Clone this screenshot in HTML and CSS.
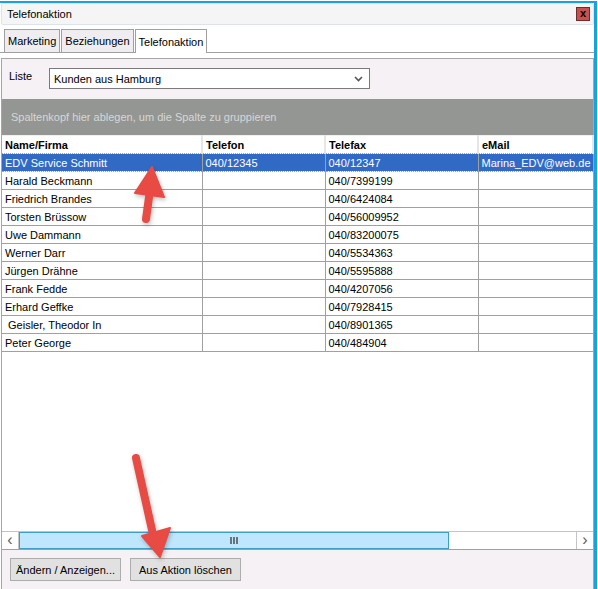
FILE: index.html
```html
<!DOCTYPE html>
<html lang="de">
<head>
    <meta charset="UTF-8">
    <title>Telefonaktion</title>
    <link rel="stylesheet" href="styles.css">
</head>
<body>
    <div class="window">
        <div class="titlebar">
            <span class="title">Telefonaktion</span>
            <span class="close">x</span>
        </div>

        <div class="tabs">
            <div class="tab">Marketing</div>
            <div class="tab">Beziehungen</div>
            <div class="tab active">Telefonaktion</div>
        </div>

        <div class="panel">
            <div class="list-row">
                <label>Liste</label>
                <div class="combo">
                    <span>Kunden aus Hamburg</span>
                    <svg class="chevron" width="9" height="6" viewBox="0 0 9 6"><path d="M1 1 L4.5 4.5 L8 1" fill="none" stroke="#555" stroke-width="1.6"/></svg>
                </div>
            </div>

            <div class="group-area">Spaltenkopf hier ablegen, um die Spalte zu gruppieren</div>

            <div class="grid">
                <table>
                    <colgroup>
                        <col class="c-name">
                        <col class="c-tel">
                        <col class="c-fax">
                        <col class="c-mail">
                    </colgroup>
                    <thead>
                        <tr>
                            <th>Name/Firma</th>
                            <th>Telefon</th>
                            <th>Telefax</th>
                            <th>eMail</th>
                        </tr>
                    </thead>
                    <tbody>
                        <tr class="selected"><td>EDV Service Schmitt</td><td>040/12345</td><td>040/12347</td><td>Marina_EDV@web.de</td></tr>
                        <tr><td>Harald Beckmann</td><td></td><td>040/7399199</td><td></td></tr>
                        <tr><td>Friedrich Brandes</td><td></td><td>040/6424084</td><td></td></tr>
                        <tr><td>Torsten Brüssow</td><td></td><td>040/56009952</td><td></td></tr>
                        <tr><td>Uwe Dammann</td><td></td><td>040/83200075</td><td></td></tr>
                        <tr><td>Werner Darr</td><td></td><td>040/5534363</td><td></td></tr>
                        <tr><td>Jürgen Drähne</td><td></td><td>040/5595888</td><td></td></tr>
                        <tr><td>Frank Fedde</td><td></td><td>040/4207056</td><td></td></tr>
                        <tr><td>Erhard Geffke</td><td></td><td>040/7928415</td><td></td></tr>
                        <tr><td>&nbsp;Geisler, Theodor In</td><td></td><td>040/8901365</td><td></td></tr>
                        <tr><td>Peter George</td><td></td><td>040/484904</td><td></td></tr>
                    </tbody>
                </table>

                <div class="hscroll">
                    <div class="sb-btn">&lsaquo;</div>
                    <div class="sb-thumb">
                        <svg width="8" height="7" viewBox="0 0 8 7"><path d="M1 0v7M4 0v7M7 0v7" stroke="#444" stroke-width="1.4"/></svg>
                    </div>
                    <div class="sb-track"></div>
                    <div class="sb-btn">&rsaquo;</div>
                </div>
            </div>

            <div class="buttons">
                <button>Ändern / Anzeigen...</button>
                <button>Aus Aktion löschen</button>
            </div>
        </div>

        <!-- Markierungspfeile -->
        <svg class="arrows" width="598" height="589" viewBox="0 0 598 589">
            <g fill="#e84a44" stroke="#e84a44" stroke-linejoin="round">
                <line x1="146" y1="219" x2="150" y2="190" stroke-width="8" stroke-linecap="round"/>
                <polygon points="152,167 135,193 164,197" stroke-width="2"/>
                <line x1="136" y1="458" x2="152" y2="530" stroke-width="8" stroke-linecap="round"/>
                <polygon points="142,536 170,528 160,557" stroke-width="2"/>
            </g>
        </svg>
    </div>
</body>
</html>
```

FILE: styles.css
```css
* {
    box-sizing: border-box;
    margin: 0;
    padding: 0;
}

body {
    background: #fff;
    font-family: 'Liberation Sans', Arial, sans-serif;
    font-size: 11px;
    color: #000;
}

.window {
    position: relative;
    width: 597px;
    height: 589px;
    margin-top: 1px;
    border-top: 2px solid #1ba1e2;
    border-right: 3px solid #1ba1e2;
    display: flex;
    flex-direction: column;
    overflow: hidden;
}

/* Titelleiste */
.titlebar {
    height: 22px;
    margin: 0 0 0 1px;
    padding: 0 3px 0 5px;
    background: #f5f5f5;
    border: 1px solid #dbe3ec;
    border-radius: 2px;
    display: flex;
    align-items: center;
    justify-content: space-between;
}

.close {
    width: 14px;
    height: 14px;
    background: #c75050;
    border: 1px solid #6e2c2c;
    font-weight: bold;
    font-size: 11px;
    line-height: 10px;
    text-align: center;
}

/* Registerkarten */
.tabs {
    margin-top: 4px;
    height: 24px;
    padding-left: 4px;
    display: flex;
    align-items: flex-end;
    border-bottom: 1px solid #a0a0a0;
}

.tab {
    height: 23px;
    padding: 0 3px;
    margin-right: 1px;
    background: #efedf0;
    border: 1px solid #a0a0a0;
    border-bottom: none;
    display: flex;
    align-items: center;
}

.tab.active {
    height: 24px;
    margin-bottom: -1px;
    background: #fff;
}

/* Hauptbereich */
.panel {
    flex: 1;
    margin: 5px 0 0 1px;
    background: #f5f1f5;
    border-top: 1px solid #a6a6a6;
    border-left: 1px solid #a6a6a6;
    border-right: 1px solid #a6a6a6;
    display: flex;
    flex-direction: column;
}

.list-row {
    height: 40px;
    padding: 9px 0 0 7px;
    display: flex;
    align-items: flex-start;
}

.list-row label {
    width: 40px;
    padding-top: 2px;
}

.combo {
    width: 321px;
    height: 21px;
    background: #fff;
    border: 1px solid #7a7a7a;
    padding: 0 6px 0 4px;
    display: flex;
    align-items: center;
    justify-content: space-between;
}

.group-area {
    height: 36px;
    background: #949693;
    color: #d6d6d6;
    padding: 12px 0 0 9px;
}

/* Tabelle */
.grid {
    height: 415px;
    background: #fff;
    border-bottom: 1px solid #a0a0a0;
    display: flex;
    flex-direction: column;
    justify-content: space-between;
}

table {
    width: 591px;
    border-collapse: collapse;
    table-layout: fixed;
}

.c-name { width: 200px; }
.c-tel { width: 123px; }
.c-fax { width: 153px; }
.c-mail { width: 115px; }

th {
    height: 18px;
    text-align: left;
    padding: 0 0 0 3px;
    border-right: 2px solid #e6e6e6;
    border-top: 1px solid #f0f0f0;
}

td {
    height: 18px;
    padding: 0 0 0 3px;
    border-right: 1px solid #a0a0a0;
    border-bottom: 1px solid #a0a0a0;
    white-space: nowrap;
    overflow: hidden;
}

tr.selected td {
    background: #316ac5;
    color: #fff;
    border-top: 1px dotted #c8a060;
    border-bottom: 1px dotted #c8a060;
}

.hscroll {
    height: 18px;
    display: flex;
    border-top: 1px solid #c4c4c4;
}

.sb-btn {
    width: 17px;
    background: #fff;
    color: #606060;
    font-size: 16px;
    line-height: 15px;
    text-align: center;
    border-right: 1px solid #c4c4c4;
}

.sb-btn:last-child {
    border-right: none;
    border-left: 1px solid #c4c4c4;
}

.sb-thumb {
    width: 430px;
    background: #bee6fd;
    border: 1px solid #3c9fc8;
    display: flex;
    align-items: center;
    justify-content: center;
}

.sb-track {
    flex: 1;
    background: #fff;
}

/* Schaltflächen */
.buttons {
    padding: 8px 0 0 8px;
    display: flex;
    gap: 9px;
}

button {
    width: 111px;
    height: 23px;
    background: #e1e1e1;
    border: 1px solid #adadad;
    font-family: 'Liberation Sans', Arial, sans-serif;
    font-size: 11px;
    color: #000;
}

.arrows {
    position: absolute;
    top: -3px;
    left: 0;
    pointer-events: none;
    filter: drop-shadow(1px 2px 2px rgba(0, 0, 0, 0.25));
}
```
